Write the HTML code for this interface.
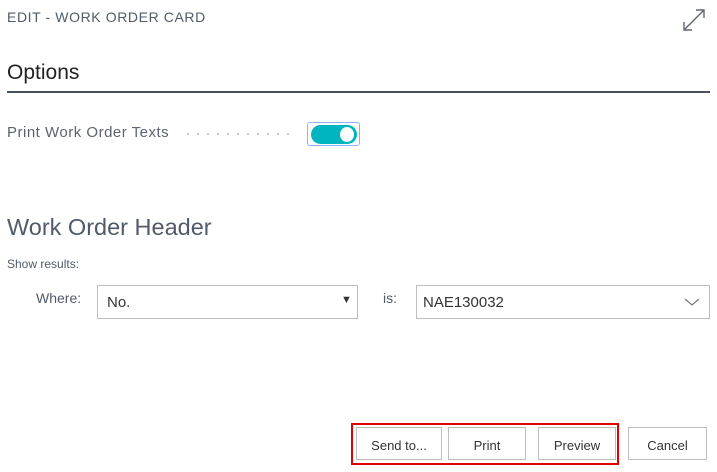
<!DOCTYPE html>
<html><head><style>
body{margin:0;width:717px;height:472px;background:#fff;font-family:"Liberation Sans",sans-serif;position:relative;overflow:hidden}
.a{position:absolute;white-space:nowrap}
.btn{position:absolute;top:427px;height:33px;border:1px solid #bdbdbd;box-sizing:border-box;background:#fff;font-size:13px;color:#333;text-align:center;line-height:36px}
</style></head><body>
<div class="a" style="left:7px;top:9px;font-size:14px;color:#505a68;letter-spacing:0.6px">EDIT - WORK ORDER CARD</div>
<svg class="a" style="left:681px;top:7px" width="26" height="26" viewBox="0 0 26 26" fill="none" stroke="#606670" stroke-width="1.4"><path d="M3 23L23 3M15 3H23V11M3 15V23H11"/></svg>
<div class="a" style="left:7px;top:61px;font-size:21px;color:#222">Options</div>
<div class="a" style="left:7px;top:91px;width:703px;height:2px;background:#4a5260"></div>
<div class="a" style="left:7px;top:124px;font-size:15px;color:#5b6470;letter-spacing:0.5px">Print Work Order Texts</div>
<div class="a" style="left:187px;top:133px;width:110px;height:2px;background:repeating-linear-gradient(90deg,#c8c8c8 0 2px,transparent 2px 10px)"></div>
<div class="a" style="left:307px;top:122px;width:53px;height:24px;border:1px solid #8fb0ff;border-radius:3px;box-sizing:border-box"></div>
<div class="a" style="left:311px;top:125px;width:46px;height:19px;background:#00b5bf;border-radius:10px"></div>
<div class="a" style="left:340px;top:127px;width:14px;height:15px;background:#fff;border-radius:50%"></div>
<div class="a" style="left:7px;top:214px;font-size:23.5px;color:#505a68">Work Order Header</div>
<div class="a" style="left:7px;top:257px;font-size:12px;color:#505a68">Show results:</div>
<div class="a" style="left:36px;top:290px;font-size:14px;color:#505a68">Where:</div>
<div class="a" style="left:97px;top:285px;width:261px;height:34px;border:1px solid #bdbdbd;box-sizing:border-box"></div>
<div class="a" style="left:107px;top:294px;font-size:15px;color:#333">No.</div>
<div class="a" style="left:341px;top:294px;font-size:11px;color:#333">▼</div>
<div class="a" style="left:383px;top:290px;font-size:14px;color:#505a68">is:</div>
<div class="a" style="left:416px;top:285px;width:294px;height:34px;border:1px solid #bdbdbd;box-sizing:border-box"></div>
<div class="a" style="left:423px;top:294px;font-size:15px;color:#333">NAE130032</div>
<svg class="a" style="left:684px;top:297px" width="16" height="10" viewBox="0 0 16 10" fill="none" stroke="#777" stroke-width="1.2"><path d="M1 2L8 8L15 2"/></svg>
<div class="a" style="left:351px;top:423px;width:268px;height:42px;border:2px solid #e30000;box-sizing:border-box"></div>
<div class="btn" style="left:356px;width:86px">Send to...</div>
<div class="btn" style="left:448px;width:78px">Print</div>
<div class="btn" style="left:538px;width:78px">Preview</div>
<div class="btn" style="left:628px;width:79px">Cancel</div>
</body></html>
